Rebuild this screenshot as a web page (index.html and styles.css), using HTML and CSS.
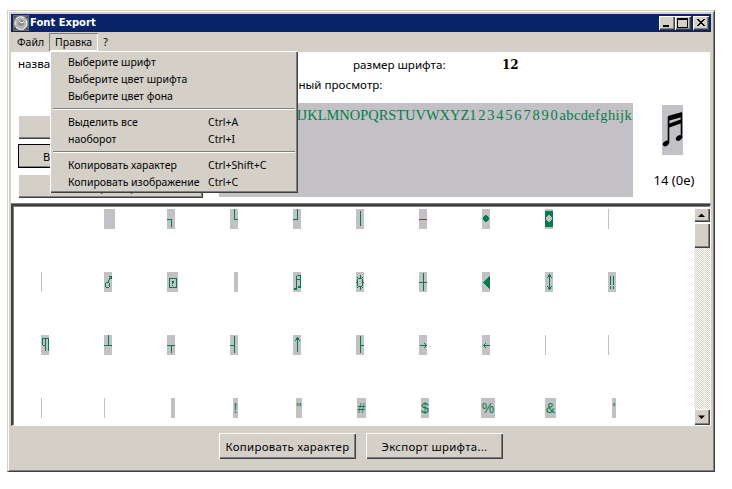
FILE: index.html
```html
<!DOCTYPE html>
<html lang="ru">
<head>
<meta charset="utf-8">
<title>Font Export</title>
<link rel="stylesheet" href="styles.css">
</head>
<body>
<div class="window">
  <div class="titlebar">
    <svg class="appicon" width="16" height="16" viewBox="0 0 16 16"><rect width="16" height="16" fill="#6e6e6e"/><circle cx="8" cy="8" r="7" fill="#b4b4b4"/><circle cx="8" cy="8" r="3" fill="#8c8c8c"/><path d="M3 4c2-2 5-3 8-1M13 5c1 3 1 6-2 8M11 14c-3 1-6 0-8-2M2 10c0-2 0-3 1-4M6 6l2 2 3-1" stroke="#f4f4f4" fill="none"/><path d="M1 1l2 2M15 1l-2 2M1 15l2-2M15 15l-2-2" stroke="#333" fill="none"/></svg>
    <span class="title">Font Export</span>
    <div class="caption-btns">
      <span class="cbtn"><svg width="16" height="14" viewBox="0 0 16 14"><rect x="4" y="9" width="6" height="2" fill="#000"/></svg></span>
      <span class="cbtn"><svg width="16" height="14" viewBox="0 0 16 14"><path d="M2.500 2.500h10v9h-10z M2.500 3.500h10" fill="none" stroke="#000" shape-rendering="crispEdges"/></svg></span>
      <span class="cbtn cbtn-x"><svg width="16" height="14" viewBox="0 0 16 14"><path d="M4 3l7 7M5 3l7 7M11 3l-7 7M12 3l-7 7" stroke="#000" fill="none"/></svg></span>
    </div>
  </div>
  <div class="menubar">
    <span class="mitem">Файл</span>
    <span class="mitem mitem-open">Правка</span>
    <span class="mitem">?</span>
  </div>
  <div class="dropdown">
    <div class="ditem">Выберите шрифт</div>
    <div class="ditem">Выберите цвет шрифта</div>
    <div class="ditem">Выберите цвет фона</div>
    <div class="dsep"></div>
    <div class="ditem"><span class="dlabel">Выделить все</span><span>Ctrl+A</span></div>
    <div class="ditem"><span class="dlabel">наоборот</span><span>Ctrl+I</span></div>
    <div class="dsep"></div>
    <div class="ditem"><span class="dlabel">Копировать характер</span><span>Ctrl+Shift+C</span></div>
    <div class="ditem"><span class="dlabel">Копировать изображение</span><span>Ctrl+C</span></div>
  </div>
  <div class="top">
    <div class="left">
      <div class="fontname">название шрифта:</div>
      <button class="btn side">Выберите шрифт</button>
      <button class="btn side focus">Выберите цвет символов</button>
      <button class="btn side">Выберите фон</button>
    </div>
    <div class="mid">
      <div class="sizerow"><span class="sizelabel">размер шрифта:</span><b class="sizeval">12</b></div>
      <div class="prevlabel">предварительный просмотр:</div>
      <div class="preview">ABCDEFGHIJKLMNOPQRSTUVWXYZ<span class="digits">1234567890</span><span class="lower">abcdefghijklmnop</span></div>
    </div>
    <div class="charbox">
      <div class="bigchar"><svg width="21" height="50" viewBox="0 0 21 50"><path d="M6 11L20 7V12L6 16ZM6 19L20 14V18L6 23Z" fill="#000"/><path d="M6.500 12V38M19.500 8V33" stroke="#000" stroke-width="1.600" fill="none"/><ellipse cx="4" cy="38.500" rx="3.400" ry="2.400" transform="rotate(-35 4 38.500)" fill="#000"/><ellipse cx="17" cy="33" rx="3.400" ry="2.400" transform="rotate(-35 17 33)" fill="#000"/></svg></div>
      <div class="charcode">14 (0e)</div>
    </div>
  </div>
  <div class="listbox">
    <div class="grid">
      <div class="cell"></div>
      <div class="cell"><span class="ch w11"></span></div>
      <div class="cell"><span class="ch w8"><svg class="g" viewBox="0 0 8 20"><path d="M0 10.500H4.500V18"/></svg></span></div>
      <div class="cell"><span class="ch w8"><svg class="g" viewBox="0 0 8 20"><path d="M4.500 0V10.500H8"/></svg></span></div>
      <div class="cell"><span class="ch w8"><svg class="g" viewBox="0 0 8 20"><path d="M4.500 0V10.500H0"/></svg></span></div>
      <div class="cell"><span class="ch w8"><svg class="g" viewBox="0 0 8 20"><path d="M4.500 2V17"/></svg></span></div>
      <div class="cell"><span class="ch w8"><svg class="g" viewBox="0 0 8 20"><path d="M0 10.500H8"/></svg></span></div>
      <div class="cell"><span class="ch w8"><svg class="g" viewBox="0 0 8 20"><path class="fill" d="M3 6H5V7H6V8H7V11H6V12H5V13H3V12H2V11H1V8H2V7H3Z"/></svg></span></div>
      <div class="cell"><span class="ch w8"><svg class="g" viewBox="0 0 8 20"><path class="fill" d="M0 2H8V18H0Z"/><path class="hole" d="M3 6H5V7H6V8H7V11H6V12H5V13H3V12H2V11H1V8H2V7H3Z"/></svg></span></div>
      <div class="cell"><span class="ch w1"></span></div>

      <div class="cell"><span class="ch w1"></span></div>
      <div class="cell"><span class="ch w8"><svg class="g" viewBox="0 0 8 20"><path d="M4.500 4.500H7.500V7M7 5L4 10"/><circle cx="3.500" cy="13" r="2.500"/></svg></span></div>
      <div class="cell"><span class="ch w11"><svg class="g" viewBox="0 0 11 20"><path d="M2.500 6.500H9.500V15.500H2.500Z"/><path class="fill" d="M5 9H7V11H6V12H5ZM5 13H6V14H5Z"/></svg></span></div>
      <div class="cell"><span class="ch w4 o4"></span></div>
      <div class="cell"><span class="ch w8"><svg class="g" viewBox="0 0 8 20"><path d="M3.500 3.500H7.500V14M3.500 3.500V16M3.500 7.500H7.500"/><path class="fill" d="M1 16H4V18H1ZM5 14H8V16H5Z"/></svg></span></div>
      <div class="cell"><span class="ch w8"><svg class="g" viewBox="0 0 8 20"><path d="M2.500 6.500H5.500L6.500 8V13L5.500 14.500H2.500L1.500 13V8ZM4 3V6M4 15V18M0 10.500H1M7 10.500H8M1 5L2 6M7 5L6 6M1 16L2 15M7 16L6 15"/></svg></span></div>
      <div class="cell"><span class="ch w8"><svg class="g" viewBox="0 0 8 20"><path d="M4.500 1V19M0 10.500H8"/></svg></span></div>
      <div class="cell"><span class="ch w8"><svg class="g" viewBox="0 0 8 20"><path class="fill" d="M8 4V17L1 10.500Z"/></svg></span></div>
      <div class="cell"><span class="ch w8"><svg class="g" viewBox="0 0 8 20"><path d="M4.500 3V17M2 6L4.500 3L7 6M2 14L4.500 17L7 14"/></svg></span></div>
      <div class="cell"><span class="ch w8"><svg class="g" viewBox="0 0 8 20"><path d="M2.500 4V13M5.500 4V13M2.500 14V17M5.500 14V17"/></svg></span></div>

      <div class="cell"><span class="ch w8"><svg class="g" viewBox="0 0 8 20"><path d="M7.500 3.500H2L1 5V8L2 10H4.500V3.500M4.500 10V16M7.500 3.500V16"/></svg></span></div>
      <div class="cell"><span class="ch w8"><svg class="g" viewBox="0 0 8 20"><path d="M4.500 0V10.500M0 10.500H8"/></svg></span></div>
      <div class="cell"><span class="ch w8"><svg class="g" viewBox="0 0 8 20"><path d="M0 10.500H8M4.500 10.500V18"/></svg></span></div>
      <div class="cell"><span class="ch w8"><svg class="g" viewBox="0 0 8 20"><path d="M4.500 1V18M0 10.500H4.500"/></svg></span></div>
      <div class="cell"><span class="ch w8"><svg class="g" viewBox="0 0 8 20"><path d="M4.500 3V17M2 6L4.500 3L7 6"/></svg></span></div>
      <div class="cell"><span class="ch w8"><svg class="g" viewBox="0 0 8 20"><path d="M4.500 1V18M4.500 10.500H8"/></svg></span></div>
      <div class="cell"><span class="ch w8"><svg class="g" viewBox="0 0 8 20"><path d="M1 10.500H7M5 8L7.500 10.500L5 13"/></svg></span></div>
      <div class="cell"><span class="ch w8"><svg class="g" viewBox="0 0 8 20"><path d="M1 10.500H8M4 8L1.500 10.500L4 13"/></svg></span></div>
      <div class="cell"><span class="ch w1"></span></div>
      <div class="cell"><span class="ch w1"></span></div>

      <div class="cell"><span class="ch w1"></span></div>
      <div class="cell"><span class="ch w1"></span></div>
      <div class="cell"><span class="ch w4 o4"></span></div>
      <div class="cell"><span class="ch w5 o3">!</span></div>
      <div class="cell"><span class="ch w6 o3">"</span></div>
      <div class="cell"><span class="ch w9 o1">#</span></div>
      <div class="cell"><span class="ch w8 o2">$</span></div>
      <div class="cell"><span class="ch w14 on1">%</span></div>
      <div class="cell"><span class="ch w11">&amp;</span></div>
      <div class="cell"><span class="ch w4 o4">'</span></div>
    </div>
    <div class="scrollbar">
      <span class="sbtn sbtn-up"><svg width="16" height="14" viewBox="0 0 16 14"><path d="M4 9H11L7.500 5.500Z" fill="#000"/></svg></span>
      <span class="thumb"></span>
      <span class="track"></span>
      <span class="sbtn sbtn-down"><svg width="16" height="16" viewBox="0 0 16 16"><path d="M4 6.500H11L7.500 10Z" fill="#000"/></svg></span>
    </div>
  </div>
  <div class="bottom">
    <button class="btn wide">Копировать характер</button>
    <button class="btn wide">Экспорт шрифта...</button>
  </div>
</div>
</body>
</html>
```
FILE: styles.css
```css
* { box-sizing: border-box; }
html, body { margin: 0; background: #fff; }
body { padding: 10px 0 0 7px; width: 732px; height: 489px; overflow: hidden; font: 10.500px/13px "Noto Sans", sans-serif; color: #000; }
.window {
  position: relative; width: 708px; height: 462px; padding: 4px 3px 1px 3px; background: #d4d0c8;
  border: 1px solid; border-color: #d4d0c8 #404040 #404040 #d4d0c8;
  box-shadow: inset 1px 1px 0 #fff, inset -1px -1px 0 #808080;
  display: flex; flex-direction: column;
}
.titlebar { height: 18px; margin-top: -1px; background: #0a246a; display: flex; align-items: center; padding: 0 2px 0 2px; flex: none; }
.appicon { flex: none; }
.title { color: #fff; font: bold 10px/16px "DejaVu Sans", sans-serif; margin-left: 1px; }
.caption-btns { margin-left: auto; display: flex; }
.cbtn {
  width: 16px; height: 14px; background: #d4d0c8; display: block;
  box-shadow: inset 1px 1px 0 #fff, inset -1px -1px 0 #404040, inset -2px -2px 0 #808080;
}
.cbtn-x { margin-left: 2px; }
.cbtn svg { display: block; }
.menubar { height: 20px; display: flex; flex: none; align-items: flex-start; padding-top: 1px; }
.mitem { padding: 0 6px; height: 18px; line-height: 18px; }
.mitem-open { margin-left: -1px; margin-right: -1px; box-shadow: inset 1px 1px 0 #808080, inset -1px -1px 0 #fff; }
.dropdown {
  position: absolute; left: 42px; top: 40px; width: 248px; height: 142px; padding: 3px 3px 0 3px; background: #d4d0c8; z-index: 5;
  box-shadow: inset 1px 1px 0 #fff, inset -1px -1px 0 #404040, inset -2px -2px 0 #808080;
}
.ditem { height: 17px; line-height: 17px; padding-left: 15px; display: flex; white-space: nowrap; }
.dlabel { width: 140px; flex: none; }
.dsep { height: 2px; margin: 3px 0 4px 0; background: #808080; border-bottom: 1px solid #fff; }
.top { height: 152px; flex: none; background: #fff; display: flex; margin-right: 1px; border-bottom: 1px solid #808080; font-size: 11.600px; }
.left { width: 208px; flex: none; padding: 4px 0 0 7px; display: flex; flex-direction: column; }
.fontname { height: 59px; line-height: 16px; white-space: nowrap; flex: none; }
.btn { font: 11px/13px "Noto Sans", sans-serif; color: #000; background: #d4d0c8; border: 0; padding: 0; box-shadow: inset 1px 1px 0 #fff, inset -1px -1px 0 #404040, inset -2px -2px 0 #808080; }
.side { width: 185px; height: 24px; margin-bottom: 5px; flex: none; }
.side.focus { outline: 1px solid #000; outline-offset: -1px; margin-bottom: 6px; white-space: nowrap; }
.mid { width: 414px; flex: none; display: flex; flex-direction: column; }
.sizerow { height: 26px; padding: 5px 0 0 134px; display: flex; line-height: 16px; }
.sizelabel { width: 149px; }
.sizeval { font: bold 12px/16px "DejaVu Serif", serif; }
.prevlabel { height: 25px; line-height: 14px; white-space: nowrap; }
.preview { height: 94px; width: 414px; background: #c3c1c5; color: #008048; overflow: hidden; white-space: nowrap; font: 14.450px/24px "Liberation Serif", serif; }
.digits { letter-spacing: 1.800px; }
.lower { letter-spacing: .4px; }
.charbox { flex: 1; display: flex; flex-direction: column; align-items: center; padding-top: 53px; }
.bigchar { width: 21px; height: 50px; background: #c3c1c5; margin-left: 2px; flex: none; }
.bigchar svg { display: block; }
.charcode { margin-top: 18px; margin-left: 5px; font-size: 13px; line-height: 14px; white-space: nowrap; }
.listbox { height: 222px; flex: none; background: #fff; display: flex; border: solid; border-width: 2px 1px 1px 2px; border-color: #404040 #fff #fff #404040; box-shadow: inset 1px 1px 0 #808080; overflow: hidden; padding-top: 2px; }
.grid { flex: 1; display: grid; grid-template-columns: repeat(10, 63px); grid-auto-rows: 63px; padding: 1px 0 0 28px; overflow: hidden; }
.cell { height: 20px; }
.ch { display: block; height: 20px; background: #c3c1c5; color: #008048; font: 14px/20px "Liberation Sans", sans-serif; overflow: hidden; text-align: center; }
.w1 { width: 1px; } .w4 { width: 4px; } .w5 { width: 5px; } .w6 { width: 6px; } .w8 { width: 8px; } .w9 { width: 9px; } .w11 { width: 11px; } .w14 { width: 14px; }
.o1 { margin-left: 1px; } .o2 { margin-left: 2px; } .o3 { margin-left: 3px; } .o4 { margin-left: 4px; } .on1 { margin-left: -1px; }
.g { display: block; width: 100%; height: 20px; fill: none; stroke: #008048; stroke-width: 1; shape-rendering: crispEdges; }
.g .fill { fill: #008048; stroke: none; }
.g .hole { fill: #c3c1c5; stroke: none; }
.scrollbar { width: 16px; flex: none; display: flex; flex-direction: column; }
.sbtn, .thumb { background: #d4d0c8; box-shadow: inset 1px 1px 0 #fff, inset -1px -1px 0 #404040, inset -2px -2px 0 #808080; flex: none; display: block; }
.sbtn-up { height: 14px; margin-bottom: 1px; }
.sbtn-down { height: 16px; }
.sbtn svg { display: block; }
.thumb { height: 25px; }
.track { flex: 1; background-color: #fff; background-image: conic-gradient(#d4d0c8 25%, #fff 0 50%, #d4d0c8 0 75%, #fff 0); background-size: 2px 2px; }
.bottom { flex: 1; display: flex; gap: 10px; padding: 7px 0 0 208px; }
.wide { width: 137px; height: 26px; font-size: 11.400px; letter-spacing: .3px; flex: none; }
```
